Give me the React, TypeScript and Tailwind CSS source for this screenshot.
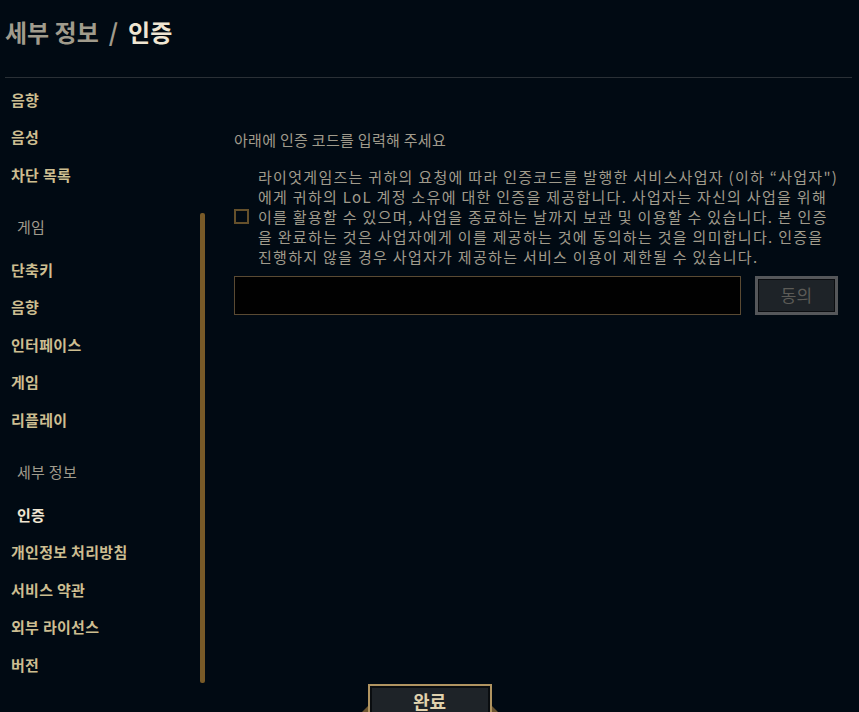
const FONT = "font-['Noto_Sans_CJK_KR','Noto_Sans',sans-serif]"

type NavEntry = { label: string; kind?: 'header' | 'active' }

const NAV: NavEntry[] = [
  { label: '음향' },
  { label: '음성' },
  { label: '차단 목록' },
  { label: '게임', kind: 'header' },
  { label: '단축키' },
  { label: '음향' },
  { label: '인터페이스' },
  { label: '게임' },
  { label: '리플레이' },
  { label: '세부 정보', kind: 'header' },
  { label: '인증', kind: 'active' },
  { label: '개인정보 처리방침' },
  { label: '서비스 약관' },
  { label: '외부 라이선스' },
  { label: '버전' },
]

const TERMS = [
  '라이엇게임즈는 귀하의 요청에 따라 인증코드를 발행한 서비스사업자 (이하 “사업자")',
  '에게 귀하의 LoL 계정 소유에 대한 인증을 제공합니다. 사업자는 자신의 사업을 위해',
  '이를 활용할 수 있으며, 사업을 종료하는 날까지 보관 및 이용할 수 있습니다. 본 인증',
  '을 완료하는 것은 사업자에게 이를 제공하는 것에 동의하는 것을 의미합니다. 인증을',
  '진행하지 않을 경우 사업자가 제공하는 서비스 이용이 제한될 수 있습니다.',
]

function NavItem({ item }: { item: NavEntry }) {
  if (item.kind === 'header') {
    return (
      <div className="h-[57.5px] pt-[9px] pl-[17px] flex items-center text-[15px] tracking-[0.3px] text-[#a09b8c]">
        {item.label}
      </div>
    )
  }
  if (item.kind === 'active') {
    return (
      <div className="h-[37.5px] pl-[17px] flex items-center text-[15px] tracking-[0.3px] font-bold text-[#f0e6d2]">
        {item.label}
      </div>
    )
  }
  return (
    <div className="h-[37.5px] pl-[11px] flex items-center text-[15px] tracking-[0.3px] font-bold text-[#cdbe91]">
      {item.label}
    </div>
  )
}

export default function App() {
  return (
    <div className={`${FONT} w-[859px] h-[712px] overflow-hidden bg-[#010a13] flex flex-col`}>
      {/* title */}
      <div className="h-[77px] shrink-0 pb-[13px] pl-[5px] flex items-center text-[24px] font-bold">
        <span className="text-[#a09b8c]">세부 정보</span>
        <span className="text-[#a09b8c] mx-[10px]">/</span>
        <span className="text-[#f0e6d2]">인증</span>
      </div>
      <div className="h-px shrink-0 ml-[5px] mr-[7px] bg-[#2a3036]" />

      <div className="flex pt-[3px] shrink-0">
        {/* sidebar */}
        <div className="w-[205px] shrink-0 flex">
          <nav className="w-[200px] flex flex-col">
            {NAV.map((item, i) => (
              <NavItem key={i} item={item} />
            ))}
          </nav>
          <div className="w-[5px]">
            <div className="mt-[132px] h-[470px] w-[5px] rounded-[2px] bg-[#785a28]" />
          </div>
        </div>

        {/* content */}
        <div className="ml-[29px] w-[604px] pt-[49px]">
          <div className="text-[15px] leading-[20px] tracking-[0.3px] text-[#a09b8c]">
            아래에 인증 코드를 입력해 주세요
          </div>

          <div className="mt-[16.7px] flex items-center">
            <div className="w-[15px] h-[15px] shrink-0 border-2 border-[#65502b] bg-[#010a13]" />
            <p className="ml-[9px] text-[15px] leading-[20px] tracking-[1.3px] text-[#a09b8c]">
              {TERMS.map((line, i) => (
                <span key={i} className="block whitespace-nowrap">
                  {line}
                </span>
              ))}
            </p>
          </div>

          <div className="mt-[9px] flex gap-[14px]">
            <input
              className="w-[507px] h-[39px] bg-[#010101] border border-[#5a4a33] outline-none px-2 text-[14px] text-[#f0e6d2]"
              type="text"
            />
            <button className="w-[83px] h-[39px] border-[3px] border-[#55575a] bg-[#1e2328] shadow-[inset_0_0_0_1px_#0b0d10] text-[17px] text-[#5c5b57] flex items-center justify-center">
              동의
            </button>
          </div>
        </div>
      </div>

      {/* footer */}
      <div className="flex justify-center">
        <div className="relative">
          <button className="w-[124px] h-[38px] border-2 border-[#b09461] bg-[#1e2328] shadow-[inset_0_0_0_2px_#0a0d10] text-[18px] leading-[22px] font-bold text-[#e0d2ae] flex items-start justify-center pt-[4px]">
            완료
          </button>
          <div className="absolute left-[-6px] top-[22px] w-0 h-0 border-y-[6px] border-y-transparent border-r-[6px] border-r-[#6a5430]" />
          <div className="absolute right-[-6px] top-[22px] w-0 h-0 border-y-[6px] border-y-transparent border-l-[6px] border-l-[#6a5430]" />
        </div>
      </div>
    </div>
  )
}
